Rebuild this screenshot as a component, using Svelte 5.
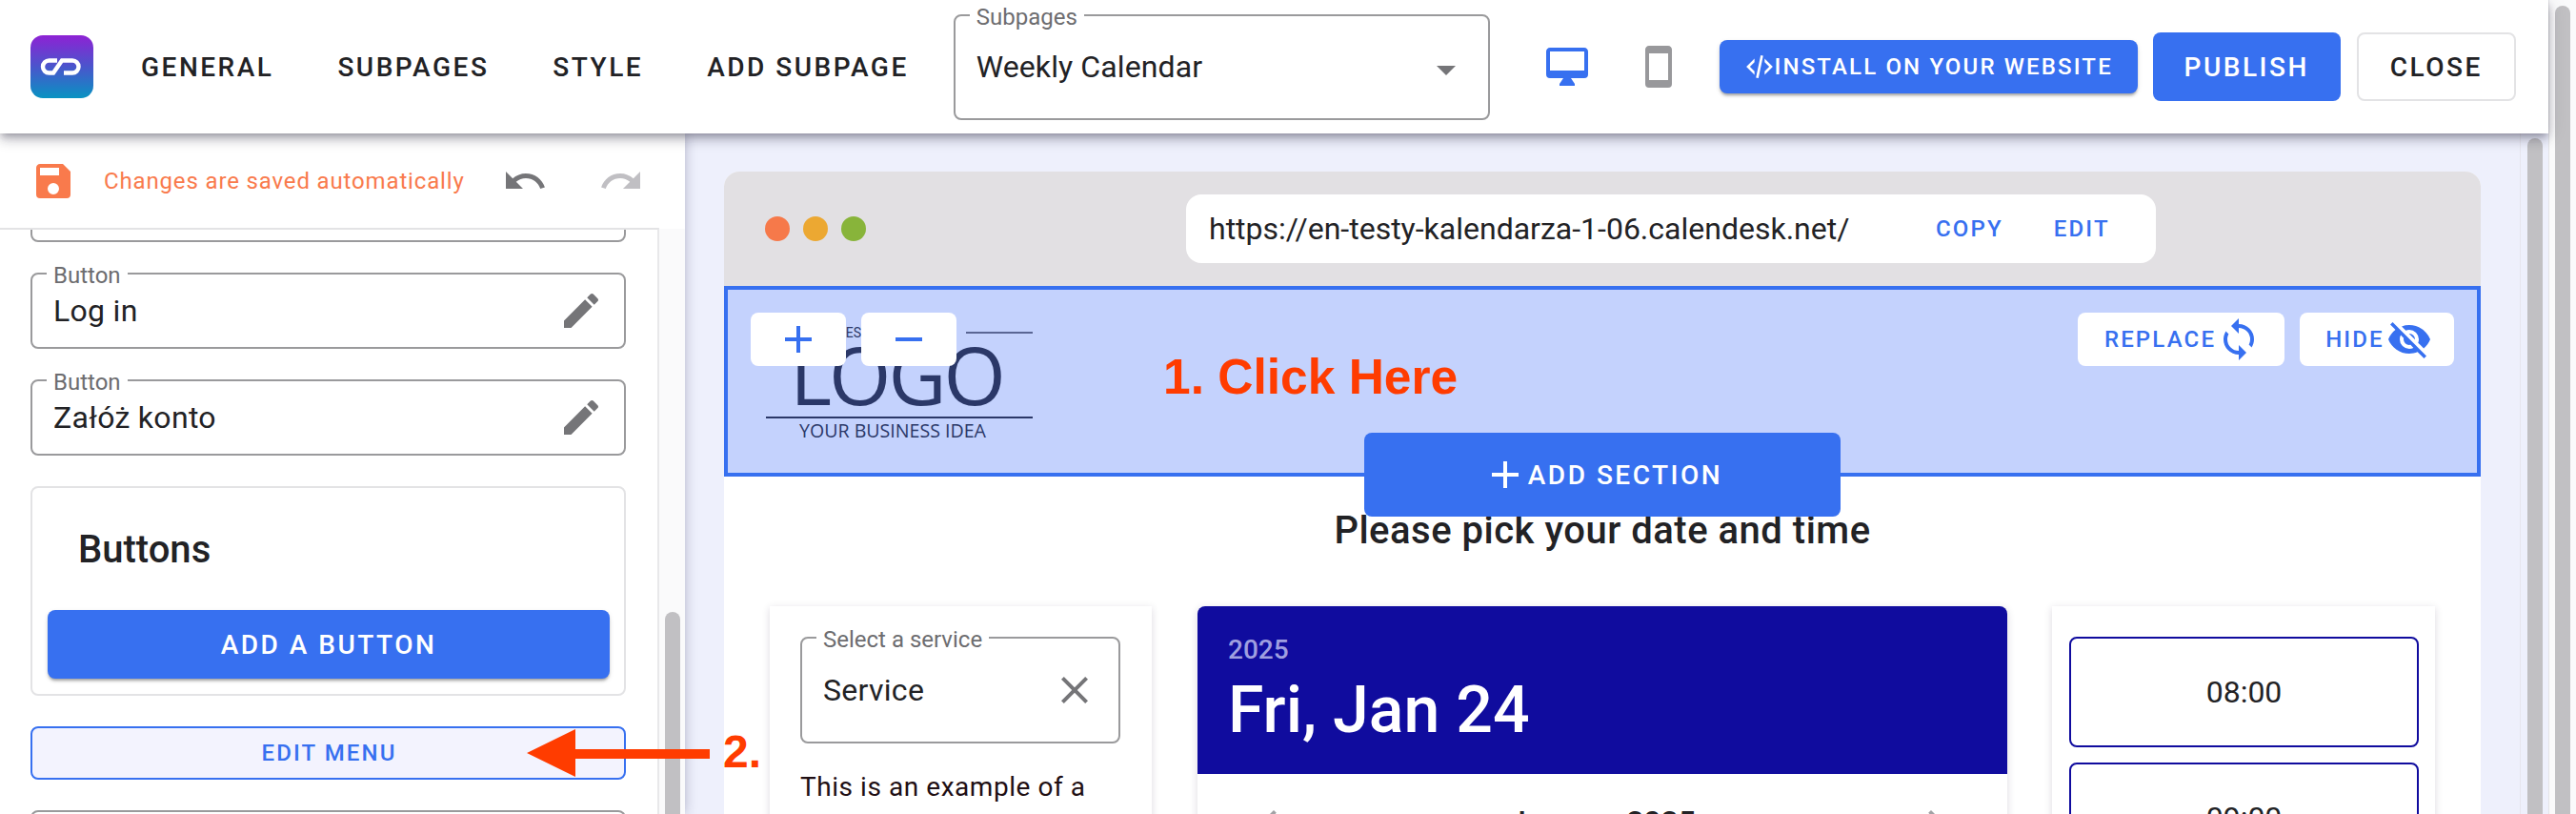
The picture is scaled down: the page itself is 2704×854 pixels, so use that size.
<script>
  const pencil = "M20.71,7.04C21.1,6.65 21.1,6 20.71,5.63L18.37,3.29C18,2.9 17.35,2.9 16.96,3.29L15.12,5.12L18.87,8.87M3,17.25V21H6.75L17.81,9.93L14.06,6.18L3,17.25Z";
  const plus = "M19,13H13V19H11V13H5V11H11V5H13V11H19V13Z";
  const buttons = ["Log in", "Załóż konto"];
  const nav = ["GENERAL", "SUBPAGES", "STYLE", "ADD SUBPAGE"];
</script>

<div class="root">
  <div class="main">
    <header class="topbar">
      <svg class="brand" viewBox="0 0 66 66" width="66" height="66">
        <defs>
          <linearGradient id="bg" x1="0" y1="0" x2="0" y2="1">
            <stop offset="0" stop-color="#8e22d4" />
            <stop offset="0.5" stop-color="#4a55cc" />
            <stop offset="1" stop-color="#0893c2" />
          </linearGradient>
        </defs>
        <rect width="66" height="66" rx="13" fill="url(#bg)" />
        <path d="M28 26.5H19.5A6.5 6.5 0 0 0 19.5 39.5H24L33 26.5H44A6.5 6.5 0 0 1 44 39.5H35" fill="none" stroke="#fff" stroke-width="4.4" />
      </svg>
      <nav class="nav">
        {#each nav as item}<span class="nav-item">{item}</span>{/each}
      </nav>
      <fieldset class="field select">
        <legend>Subpages</legend>
        <span class="value">Weekly Calendar</span>
        <svg class="ico arrow" viewBox="0 0 24 24"><path d="M7,10L12,15L17,10H7Z" /></svg>
      </fieldset>
      <svg class="ico desktop" viewBox="0 0 24 24"><path d="M21,14H3V4H21M21,2H3C1.89,2 1,2.89 1,4V16A2,2 0 0,0 3,18H10L8,21V22H16V21L14,18H21A2,2 0 0,0 23,16V4C23,2.89 22.1,2 21,2Z" /></svg>
      <svg class="ico phone" viewBox="0 0 24 24"><path d="M17,19H7V5H17M17,1H7C5.89,1 5,1.89 5,3V21A2,2 0 0,0 7,23H17A2,2 0 0,0 19,21V3C19,1.89 18.1,1 17,1Z" /></svg>
      <button class="btn install">
        <svg class="code" viewBox="0 0 24 24"><path d="M12.89,3L14.85,3.4L11.11,21L9.15,20.6L12.89,3M19.59,12L16,8.41V5.58L22.42,12L16,18.41V15.58L19.59,12M1.58,12L8,5.58V8.41L4.41,12L8,15.59V18.42L1.58,12Z" /></svg>
        INSTALL ON YOUR WEBSITE
      </button>
      <button class="btn publish">PUBLISH</button>
      <button class="btn close">CLOSE</button>
    </header>

    <div class="below">
      <aside class="panel">
        <div class="savebar">
          <svg class="ico save" viewBox="0 0 24 24"><path d="M15,9H5V5H15M12,19A3,3 0 0,1 9,16A3,3 0 0,1 12,13A3,3 0 0,1 15,16A3,3 0 0,1 12,19M17,3H5C3.89,3 3,3.9 3,5V19A2,2 0 0,0 5,21H19A2,2 0 0,0 21,19V7L17,3Z" /></svg>
          <span class="saved">Changes are saved automatically</span>
          <svg class="ico undo" viewBox="0 0 24 24"><path d="M12.5,8C9.85,8 7.45,9 5.6,10.6L2,7V16H11L7.38,12.38C8.77,11.22 10.54,10.5 12.5,10.5C16.04,10.5 19.05,12.81 20.1,16L22.47,15.22C21.08,11.03 17.15,8 12.5,8Z" /></svg>
          <svg class="ico redo" viewBox="0 0 24 24"><path d="M18.4,10.6C16.55,9 14.15,8 11.5,8C6.85,8 2.92,11.03 1.54,15.22L3.9,16C4.95,12.81 7.95,10.5 11.5,10.5C13.45,10.5 15.23,11.22 16.62,12.38L13,16H22V7L18.4,10.6Z" /></svg>
        </div>
        <div class="panel-body">
          <div class="panel-list">
            <fieldset class="field row clipped"></fieldset>
            {#each buttons as b}
              <fieldset class="field row">
                <legend>Button</legend>
                <span class="value">{b}</span>
                <svg class="ico pencil" viewBox="0 0 24 24"><path d={pencil} /></svg>
              </fieldset>
            {/each}
            <section class="card">
              <h3>Buttons</h3>
              <button class="btn add">ADD A BUTTON</button>
            </section>
            <button class="edit-menu">EDIT MENU</button>
            <fieldset class="field row"></fieldset>
          </div>
          <div class="track inner-track"><div class="thumb"></div></div>
        </div>
      </aside>

      <div class="workspace">
        <div class="canvas">
          <div class="window">
            <div class="chrome">
              <i class="dot d1"></i><i class="dot d2"></i><i class="dot d3"></i>
              <div class="url">
                <span class="url-text">https://en-testy-kalendarza-1-06.calendesk.net/</span>
                <span class="url-link copy">COPY</span>
                <span class="url-link edit">EDIT</span>
              </div>
            </div>

            <div class="hero">
              <div class="logo">
                <div class="logo-top"><span>BEST</span><i></i></div>
                <div class="logo-word">LOGO</div>
                <div class="logo-tag">YOUR BUSINESS IDEA</div>
              </div>
              <div class="tools">
                <button class="tool square"><svg class="ico blue" viewBox="0 0 24 24"><path d={plus} /></svg></button>
                <button class="tool square"><svg class="ico blue" viewBox="0 0 24 24"><path d="M19,13H5V11H19V13Z" /></svg></button>
              </div>
              <div class="tools">
                <button class="tool replace">REPLACE<svg class="ico blue" viewBox="0 0 24 24"><path d="M12,18A6,6 0 0,1 6,12C6,11 6.25,10.03 6.7,9.2L5.24,7.74C4.46,8.97 4,10.43 4,12A8,8 0 0,0 12,20V23L16,19L12,15M12,4V1L8,5L12,9V6A6,6 0 0,1 18,12C18,13 17.75,13.97 17.3,14.8L18.76,16.26C19.54,15.03 20,13.57 20,12A8,8 0 0,0 12,4Z" /></svg></button>
                <button class="tool hide">HIDE<svg class="ico blue" viewBox="0 0 24 24"><path d="M11.83,9L15,12.16C15,12.11 15,12.05 15,12A3,3 0 0,0 12,9C11.94,9 11.89,9 11.83,9M7.53,9.8L9.08,11.35C9.03,11.56 9,11.77 9,12A3,3 0 0,0 12,15C12.22,15 12.44,14.97 12.65,14.92L14.2,16.47C13.53,16.8 12.79,17 12,17A5,5 0 0,1 7,12C7,11.21 7.2,10.47 7.53,9.8M2,4.27L4.28,6.55L4.73,7C3.08,8.3 1.78,10 1,12C2.73,16.39 7,19.5 12,19.5C13.55,19.5 15.03,19.2 16.38,18.66L16.81,19.08L19.73,22L21,20.73L3.27,3M12,7A5,5 0 0,1 17,12C17,12.64 16.87,13.26 16.64,13.82L19.57,16.75C21.07,15.5 22.27,13.86 23,12C21.27,7.61 17,4.5 12,4.5C10.6,4.5 9.26,4.75 8,5.2L10.17,7.35C10.74,7.13 11.35,7 12,7Z" /></svg></button>
              </div>
              <span class="note-one">1. Click Here</span>
              <button class="btn add-section"><svg class="ico white" viewBox="0 0 24 24"><path d={plus} /></svg>ADD SECTION</button>
            </div>

            <h2 class="pick">Please pick your date and time</h2>

            <div class="booking">
              <div class="b-card service">
                <fieldset class="field svc">
                  <legend>Select a service</legend>
                  <span class="value">Service</span>
                  <svg class="ico x" viewBox="0 0 24 24"><path d="M19,6.41L17.59,5L12,10.59L6.41,5L5,6.41L10.59,12L5,17.59L6.41,19L12,13.41L17.59,19L19,17.59L13.41,12L19,6.41Z" /></svg>
                </fieldset>
                <p class="desc">This is an example of a service description. You</p>
              </div>
              <div class="b-card calendar">
                <div class="cal-head">
                  <div class="year">2025</div>
                  <div class="date">Fri, Jan 24</div>
                </div>
                <div class="cal-nav">
                  <svg class="chev" viewBox="0 0 24 24"><path d="M15.41,7.41L14,6L8,12L14,18L15.41,16.59L10.83,12L15.41,7.41Z" /></svg>
                  <span>January 2025</span>
                  <svg class="chev" viewBox="0 0 24 24"><path d="M8.59,16.59L10,18L16,12L10,6L8.59,7.41L13.17,12L8.59,16.59Z" /></svg>
                </div>
              </div>
              <div class="b-card slots">
                <div class="slot">08:00</div>
                <div class="slot">09:00</div>
              </div>
            </div>
          </div>
        </div>
        <div class="track outer-track"><div class="thumb"></div></div>
      </div>
    </div>
  </div>
  <div class="track page-track"><div class="thumb"></div></div>

  <svg class="note-arrow" width="200" height="54" viewBox="0 0 200 54"><path d="M0 26L51 1V22H192V32H51V51Z" fill="#ff3c00" /></svg>
  <span class="note-two">2.</span>
</div>

<style>
  :global(body) { margin: 0; background: #fff; }
  .root { position: relative; display: flex; width: 2704px; height: 854px; overflow: hidden; font-family: Roboto, sans-serif; color: #222225; }
  .main { width: 2675px; display: flex; flex-direction: column; flex: none; }
  button { font-family: inherit; border: 0; padding: 0; cursor: pointer; }
  h2, h3, p { margin: 0; }
  .ico { width: 48px; height: 48px; flex: none; display: block; fill: #757578; }

  .topbar { position: relative; z-index: 3; flex: none; height: 140px; display: flex; align-items: center; background: #fff;
    box-shadow: 0 4px 8px -2px rgba(30,25,50,.35), 0 8px 10px rgba(30,25,50,.14), 0 2px 20px rgba(30,25,50,.12); }
  .brand { margin-left: 32px; flex: none; }
  .nav { display: flex; gap: 67px; margin-left: 50px; font-size: 28px; letter-spacing: 2.5px; font-weight: 500; }
  .field { box-sizing: border-box; margin: 0; min-width: 0; border: 2px solid #9a9a9c; border-radius: 8px; background: #fff; display: flex; align-items: center; }
  legend { font-size: 24px; line-height: 6px; height: 2px; padding: 0 7px; margin-left: -7px; color: #6d6d70; }
  .value { font-size: 32px; letter-spacing: .3px; }
  .select { margin-left: 47px; width: 563px; height: 111px; padding: 0 22px; justify-content: space-between; flex: none; }
  .select .value { letter-spacing: .1px; }
  .arrow { margin-right: -2px; margin-top: 6px; }
  .desktop { margin-left: 57px; fill: #3770f0; }
  .phone { margin-left: 48px; fill: #98989b; }
  .btn { background: #3770f0; color: #fff; border-radius: 8px; display: flex; align-items: center; justify-content: center; font-weight: 500; flex: none; }
  .install { margin-left: 40px; width: 439px; height: 56px; font-size: 24px; letter-spacing: 2.15px; box-shadow: 0 3px 3px -1px rgba(0,0,0,.3), 0 2px 5px rgba(0,0,0,.12); }
  .code { width: 32px; height: 32px; fill: #fff; margin-right: 0; }
  .publish { margin-left: 16px; width: 197px; height: 72px; font-size: 28px; letter-spacing: 2.5px; }
  .close { box-sizing: border-box; margin-left: 17px; width: 167px; height: 72px; font-size: 28px; letter-spacing: 2.5px; background: #fff; color: #222225; border: 2px solid #e3e3e5; }

  .below { flex: 1; display: flex; min-height: 0; }
  .panel { position: relative; z-index: 2; flex: none; width: 719px; display: flex; flex-direction: column; background: #fff; box-shadow: 0 0 12px rgba(40,40,80,.3); }
  .savebar { flex: none; height: 100px; display: flex; align-items: center; padding-left: 32px; }
  .save { fill: #f97a4c; }
  .saved { margin-left: 29px; font-size: 24px; letter-spacing: .85px; color: #f97a4c; width: 418px; flex: none; white-space: nowrap; }
  .undo { margin-left: 0; }
  .redo { margin-left: 53px; fill: #c0bfc3; }
  .panel-body { flex: 1; display: flex; min-height: 0; }
  .panel-list { box-sizing: border-box; width: 692px; flex: none; padding: 0 33px 0 32px; border-top: 2px solid #e3e3e5; border-right: 2px solid #e8e8ea; display: flex; flex-direction: column; gap: 32px; overflow: hidden; margin-top: -1px; }
  .row { flex: none; height: 80px; padding: 14px 22px; justify-content: space-between; }
  .clipped { margin-top: -67px; }
  .pencil { margin-right: -1px; }
  .card { flex: none; box-sizing: border-box; height: 220px; border: 2px solid #e3e3e5; border-radius: 8px; padding: 0 16px 16px 16px; display: flex; flex-direction: column; justify-content: flex-end; }
  .card h3 { font-size: 40px; font-weight: 500; line-height: 48px; margin: 0 0 39px 32px; }
  .add { width: 590px; height: 72px; font-size: 28px; letter-spacing: 2.5px; box-shadow: 0 3px 3px -1px rgba(0,0,0,.3), 0 2px 5px rgba(0,0,0,.12); }
  .edit-menu { flex: none; box-sizing: border-box; height: 56px; padding-left: 2px; background: #f3f3fe; border: 2px solid #3770f0; border-radius: 8px; color: #3770f0; font-size: 24px; font-weight: 500; letter-spacing: 2.1px; }

  .track { flex: none; display: flex; justify-content: center; background: #fafafb; }
  .thumb { width: 16px; height: 1400px; flex: none; border-radius: 8px; background: #c1c0c3; }
  .inner-track { width: 27px; }
  .inner-track .thumb { margin-top: 402px; }
  .outer-track { width: 30px; border-left: 1px solid #e6e6ee; box-sizing: border-box; background: #eef0fc; }
  .outer-track .thumb { margin-top: 5px; }
  .page-track { width: 29px; border-left: 1px solid #e4e4e6; box-sizing: border-box; }
  .page-track .thumb { margin-top: 6px; }

  .workspace { flex: 1; min-width: 0; display: flex; background: #eef0fc; }
  .canvas { flex: 1; min-width: 0; overflow: hidden; padding: 40px 41px 0; box-sizing: border-box; }
  .window { width: 1844px; height: 900px; background: #fff; border-radius: 16px 16px 0 0; overflow: hidden; }
  .chrome { height: 120px; background: #e2e0e3; display: flex; align-items: center; padding-left: 43px; }
  .dot { width: 26px; height: 26px; border-radius: 50%; margin-right: 14px; }
  .d1 { background: #f6794a; } .d2 { background: #eca832; } .d3 { background: #88b43a; margin-right: 336px; }
  .url { width: 1018px; height: 72px; background: #fff; border-radius: 16px; display: flex; align-items: center; padding-left: 24px; box-sizing: border-box; }
  .url-text { font-size: 32px; width: 763px; flex: none; white-space: nowrap; }
  .url-link { font-size: 24px; font-weight: 500; letter-spacing: 2.15px; color: #3770f0; }
  .edit { margin-left: 53px; }

  .hero { position: relative; box-sizing: border-box; height: 200px; border: 4px solid #3770f0; background: #c4d2fd; padding: 24px; display: flex; justify-content: space-between; align-items: flex-start; }
  .logo { position: absolute; left: 40px; top: 34px; width: 280px; color: #2b3868; }
  .logo-top { display: flex; align-items: center; height: 22px; font-size: 14px; padding-left: 75px; }
  .logo-top i { width: 70px; height: 2px; background: #5a6694; margin-left: auto; }
  .logo-word { font-family: "Open Sans", sans-serif; font-size: 84px; font-weight: 500; line-height: 66px; letter-spacing: -3px; text-align: center; text-indent: -6px; height: 77px; border-bottom: 2px solid #2b3868; }
  .logo-tag { font-family: "Open Sans", sans-serif; font-size: 19.6px; line-height: 26px; text-align: center; margin-left: -14px; white-space: nowrap; }
  .tools { position: relative; display: flex; gap: 16px; }
  .tool { height: 56px; background: #fff; border-radius: 8px; color: #3770f0; font-size: 24px; font-weight: 500; letter-spacing: 2.15px; display: flex; align-items: center; justify-content: center; }
  .blue { fill: #3770f0; }
  .white { fill: #fff; }
  .square { width: 100px; }
  .replace { width: 217px; }
  .hide { width: 162px; }
  .replace .ico { margin-right: -4px; }
  .hide .ico { margin-left: 2px; margin-right: -4px; }
  .note-one { position: absolute; left: 457px; top: 61px; font-family: "Liberation Sans", sans-serif; font-weight: 700; font-size: 51.5px; line-height: 60px; color: #ff3c00; white-space: nowrap; }
  .add-section { position: absolute; left: 668px; top: 150px; width: 500px; height: 88px; z-index: 1; font-size: 28px; letter-spacing: 2.5px; }

  .pick { font-size: 40px; font-weight: 500; line-height: 48px; letter-spacing: .5px; text-align: center; margin-top: 33px; height: 48px; }
  .booking { display: grid; grid-template-columns: 449px 897px 402px; padding: 55px 48px 0; }
  .b-card { background: #fff; box-shadow: 0 2px 8px rgba(40,20,60,.16); height: 300px; box-sizing: border-box; }
  .service { width: 401px; padding: 32px 33px 0 32px; }
  .svc { height: 112px; padding: 0 22px; justify-content: space-between; }
  .x { margin-right: 0; }
  .desc { margin-top: 25px; font-size: 28px; line-height: 42px; letter-spacing: .55px; color: #1f0f14; width: 336px; }
  .calendar { width: 850px; border-radius: 8px 8px 0 0; }
  .cal-head { height: 176px; background: #100c9e; color: #fff; border-radius: 8px 8px 0 0; padding: 26px 32px 0; box-sizing: border-box; }
  .year { font-size: 28px; line-height: 40px; color: #9f9fe0; font-weight: 500; }
  .date { font-size: 68px; line-height: 80px; font-weight: 500; margin-top: 3px; }
  .cal-nav { display: flex; justify-content: space-between; align-items: center; padding: 26px 52px 0; font-size: 32px; font-weight: 500; line-height: 40px; }
  .chev { width: 48px; height: 48px; fill: #a2a2a5; }
  .slots { padding: 32px 17px 0 18px; display: flex; flex-direction: column; gap: 16px; }
  .slot { flex: none; box-sizing: border-box; height: 116px; border: 2px solid #100c9e; border-radius: 8px; display: flex; align-items: center; justify-content: center; font-size: 32px; }

  .note-arrow { position: absolute; left: 553px; top: 764px; z-index: 5; }
  .note-two { position: absolute; left: 759px; top: 762px; z-index: 5; font-family: "Liberation Sans", sans-serif; font-weight: 700; font-size: 48px; line-height: 54px; color: #ff3c00; }
</style>
